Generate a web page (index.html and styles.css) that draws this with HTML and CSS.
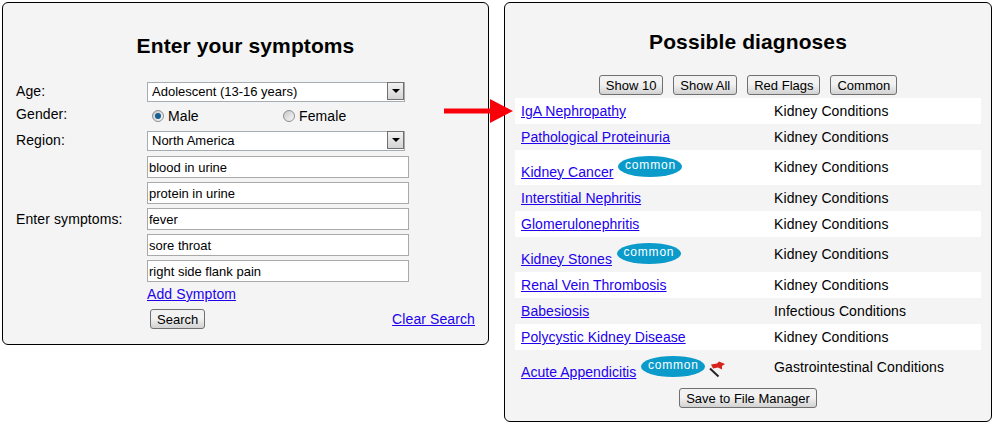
FILE: index.html
```html
<!DOCTYPE html>
<html lang="en">
<head>
  <meta charset="UTF-8">
  <title>Symptom Checker</title>
  <link rel="stylesheet" href="styles.css">
</head>
<body>

  <div class="page">
    <div class="panel panel-search">
      <h2>Enter your symptoms</h2>
      <div class="form">
        <div class="field select-row">
          <label>Age:</label>
          <div class="select-box">
            <select><option>Adolescent (13-16 years)</option></select>
            <span class="select-arrow"></span>
          </div>
        </div>
        <div class="field gender-row">
          <label>Gender:</label>
          <div class="radios">
            <span class="radio-item"><input type="radio" name="gender" checked>Male</span>
            <span class="radio-item"><input type="radio" name="gender">Female</span>
          </div>
        </div>
        <div class="field select-row">
          <label>Region:</label>
          <div class="select-box">
            <select><option>North America</option></select>
            <span class="select-arrow"></span>
          </div>
        </div>
        <div class="field symptoms">
          <label>Enter symptoms:</label>
          <div class="symptom-list">
            <input type="text" value="blood in urine">
            <input type="text" value="protein in urine">
            <input type="text" value="fever">
            <input type="text" value="sore throat">
            <input type="text" value="right side flank pain">
          </div>
        </div>
        <div class="add-row"><a href="#">Add Symptom</a></div>
        <div class="search-row">
          <button>Search</button>
          <a href="#">Clear Search</a>
        </div>
      </div>
    </div>

    <div class="panel panel-results">
      <h2>Possible diagnoses</h2>
      <div class="filters">
        <button>Show 10</button>
        <button>Show All</button>
        <button>Red Flags</button>
        <button>Common</button>
      </div>
      <table class="results">
        <tr><td><a href="#">IgA Nephropathy</a></td><td>Kidney Conditions</td></tr>
        <tr><td><a href="#">Pathological Proteinuria</a></td><td>Kidney Conditions</td></tr>
        <tr class="tall"><td><a href="#">Kidney Cancer</a> <span class="badge">common</span></td><td>Kidney Conditions</td></tr>
        <tr><td><a href="#">Interstitial Nephritis</a></td><td>Kidney Conditions</td></tr>
        <tr><td><a href="#">Glomerulonephritis</a></td><td>Kidney Conditions</td></tr>
        <tr class="tall"><td><a href="#">Kidney Stones</a> <span class="badge">common</span></td><td>Kidney Conditions</td></tr>
        <tr><td><a href="#">Renal Vein Thrombosis</a></td><td>Kidney Conditions</td></tr>
        <tr><td><a href="#">Babesiosis</a></td><td>Infectious Conditions</td></tr>
        <tr><td><a href="#">Polycystic Kidney Disease</a></td><td>Kidney Conditions</td></tr>
        <tr class="tall">
          <td>
            <a href="#">Acute Appendicitis</a> <span class="badge">common</span>
            <svg class="flag" width="17" height="17" viewBox="0 0 17 17">
              <path d="M1 7.5 L9.5 15.5" stroke="#222" stroke-width="2" fill="none"/>
              <path d="M2 3.5 L8 2.5 L10 0.5 L16 3 L13 5 L13 8.5 L9 6.5 L4 7.5 Z" fill="#d8231c"/>
            </svg>
          </td>
          <td>Gastrointestinal Conditions</td>
        </tr>
      </table>
      <div class="save-row"><button>Save to File Manager</button></div>
    </div>

    <svg class="arrow" width="70" height="26" viewBox="0 0 70 26">
      <path d="M0 10.5 H46 V1 L69 13 L46 25 V15.5 H0 Z" fill="#f7000a"/>
    </svg>
  </div>

</body>
</html>
```

FILE: styles.css
```css
* {
  box-sizing: border-box;
  font-family: "Liberation Sans", Arial, sans-serif;
}

body {
  margin: 0;
  background: #fff;
  color: #000;
  font-size: 14px;
  letter-spacing: 0.1px;
}

a {
  color: #2200ee;
}

.page {
  position: relative;
  display: flex;
  align-items: flex-start;
  gap: 15px;
  padding: 2px;
}

.panel {
  width: 488px;
  background: #f4f4f4;
  border: 1px solid #000;
  border-radius: 6px;
}

.panel-search {
  height: 343px;
  padding: 31px 13px 0;
}

.panel-results {
  height: 420px;
  padding: 27px 10px 0 10px;
}

h2 {
  margin: 0;
  font-size: 21px;
  line-height: 24px;
  font-weight: bold;
  text-align: center;
}

/* left form */
.form {
  margin-top: 23px;
}

.field {
  display: flex;
}

.field label {
  width: 131px;
  flex: none;
}

.select-row {
  height: 20px;
  line-height: 20px;
}

.select-box {
  position: relative;
  width: 258px;
  height: 20px;
}

.select-box select {
  width: 100%;
  height: 20px;
  padding: 0 0 0 4px;
  border: 1px solid #a5acb2;
  border-radius: 0;
  background: #fff;
  color: #000;
  font-size: 13px;
  letter-spacing: 0;
  appearance: none;
}

.select-arrow {
  position: absolute;
  top: 1px;
  right: 1px;
  width: 17px;
  height: 18px;
  border: 1px solid #707070;
  background: linear-gradient(#f2f2f2, #d4d4d4);
}

.select-arrow::after {
  content: "";
  position: absolute;
  left: 4px;
  top: 6px;
  border-top: 4px solid #000;
  border-left: 4px solid transparent;
  border-right: 4px solid transparent;
}

.gender-row {
  height: 29px;
  padding-top: 5px;
}

.radios {
  display: flex;
  padding-left: 5px;
  padding-top: 2px;
}

.radio-item {
  display: flex;
  align-items: center;
  width: 131px;
  height: 16px;
}

.radio-item input {
  position: relative;
  width: 12px;
  height: 12px;
  margin: 0 4px 0 0;
  border: 1px solid #8a8f94;
  border-radius: 50%;
  background: linear-gradient(135deg, #c8c8c8, #f8f8f8);
  appearance: none;
}

.radio-item input:checked::after {
  content: "";
  position: absolute;
  left: 2px;
  top: 2px;
  width: 6px;
  height: 6px;
  border-radius: 50%;
  background: #155f92;
}

.symptoms {
  margin-top: 6px;
  align-items: center;
}

.symptom-list {
  display: flex;
  flex-direction: column;
  gap: 4px;
}

.symptom-list input {
  width: 262px;
  height: 22px;
  padding: 0 1px;
  border: 1px solid #a9a9a9;
  border-radius: 0;
  background: #fff;
  color: #000;
  font-size: 13px;
  letter-spacing: 0;
}

.add-row {
  margin-top: 4px;
  padding-left: 131px;
  line-height: 16px;
}

.search-row {
  display: flex;
  justify-content: space-between;
  align-items: center;
  margin-top: 7px;
  padding-left: 134px;
}

button {
  height: 20px;
  padding: 0 6px;
  border: 1px solid #707070;
  border-radius: 3px;
  background: linear-gradient(#f2f2f2 45%, #d2d2d2);
  color: #000;
  font-size: 13px;
  letter-spacing: 0;
}

/* right list */
.filters {
  display: flex;
  justify-content: center;
  gap: 10px;
  margin-top: 21px;
}

.results {
  width: 466px;
  margin-top: 3px;
  border-collapse: collapse;
  table-layout: fixed;
}

.results tr {
  height: 26px;
}

.results tr.tall {
  height: 35px;
}

.results tr:nth-child(odd) {
  background: #fff;
}

.results td {
  padding: 0 0 0 6px;
  vertical-align: middle;
}

.results td:first-child {
  width: 253px;
}

.results td a {
  letter-spacing: 0.05px;
}

.results .tall td:last-child {
  padding-bottom: 2px;
}

.badge {
  display: inline-block;
  width: 64px;
  height: 21px;
  margin-left: 1px;
  border-radius: 50%;
  background: #0a9bcb;
  color: #fff;
  font-size: 12px;
  line-height: 19px;
  letter-spacing: 0.8px;
  text-align: center;
  vertical-align: 8px;
}

.flag {
  vertical-align: -1px;
}

.save-row {
  margin-top: 3px;
  text-align: center;
}

.arrow {
  position: absolute;
  left: 444px;
  top: 98px;
}
```
